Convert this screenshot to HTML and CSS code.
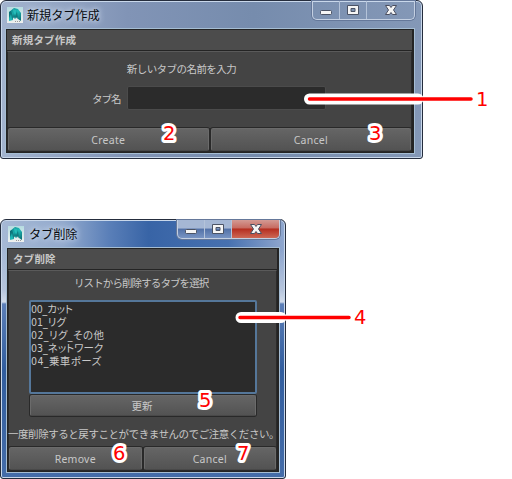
FILE: index.html
```
<!DOCTYPE html>
<html lang="ja">
<head>
<meta charset="utf-8">
<title>タブ作成・タブ削除</title>
<link rel="stylesheet" href="styles.css">
</head>
<body>
<svg class="defs" width="0" height="0" aria-hidden="true">
  <defs>
    <linearGradient id="teal" x1="0" y1="0" x2="1" y2="1"><stop offset="0" stop-color="#087d83"/><stop offset=".5" stop-color="#20bcb8"/><stop offset="1" stop-color="#08666d"/></linearGradient>
    <linearGradient id="paper" x1="0" y1="0" x2="0" y2="1"><stop offset="0" stop-color="#b5dce1"/><stop offset="1" stop-color="#f0f1ef"/></linearGradient>
    <symbol id="maya" viewBox="0 0 16 16">
      <path fill="url(#paper)" d="M0 0h16v16H0z"/>
      <path fill="url(#teal)" d="M2 5 7 1l4 1 3 4v8l-3-2-1-2-2 2-2-2v3l-4 1z"/>
      <path fill="#064e58" d="m2 5 2-1 2 5 1-3 1 3 2-5 1 8-3-2-3 2-1-5-2 4z" opacity=".5"/>
      <path fill="#35cbc5" d="m6 2 3 1-1 5-2-4z" opacity=".5"/>
      <path stroke="#999" stroke-dasharray="1 1" d="M8 14.500h6"/>
    </symbol>
    <symbol id="min" viewBox="0 0 14 12"><rect x="1.500" y="6.500" width="11" height="4" rx="1" fill="#f5f5f5" stroke="#4b5365"/></symbol>
    <symbol id="max" viewBox="0 0 14 12"><path fill="#f5f5f5" stroke="#4b5365" fill-rule="evenodd" d="M1.500 1.500h11v9h-11zM5 4.500v3h4v-3z"/></symbol>
    <symbol id="close" viewBox="0 0 14 12"><path fill="#f5f5f5" stroke="#4b4f60" d="M1.500 1.500h4L7 3.500l1.500-2h4L9.500 6l3 4.500h-4L7 8.500l-1.500 2h-4l3-4.500z"/></symbol>
  </defs>
</svg>
<main class="page">
  <section class="window create">
    <header class="titlebar">
      <svg class="app" width="16" height="16"><use href="#maya"/></svg>
      <span class="title">新規タブ作成</span>
      <div class="controls">
        <i><svg width="14" height="12"><use href="#min"/></svg></i>
        <i><svg width="14" height="12"><use href="#max"/></svg></i>
        <i class="x"><svg width="14" height="12"><use href="#close"/></svg></i>
      </div>
    </header>
    <div class="client">
      <div class="menu">新規タブ作成</div>
      <div class="content">
        <p class="prompt">新しいタブの名前を入力</p>
        <div class="field"><label>タブ名</label><span class="input"></span></div>
        <div class="actions"><div class="btn"><span>Create</span></div><div class="btn"><span>Cancel</span></div></div>
      </div>
    </div>
  </section>
  <section class="window remove">
    <header class="titlebar">
      <svg class="app" width="16" height="16"><use href="#maya"/></svg>
      <span class="title">タブ削除</span>
      <div class="controls">
        <i><svg width="14" height="12"><use href="#min"/></svg></i>
        <i><svg width="14" height="12"><use href="#max"/></svg></i>
        <i class="x"><svg width="14" height="12"><use href="#close"/></svg></i>
      </div>
    </header>
    <div class="client">
      <div class="menu">タブ削除</div>
      <div class="content">
        <p class="prompt">リストから削除するタブを選択</p>
        <ul class="list"><li class="tight">00_カット</li><li>01_リグ</li><li class="wide">02_リグ_その他</li><li>03_ネットワーク</li><li class="wide">04_乗車ポーズ</li></ul>
        <div class="btn update"><span>更新</span></div>
        <p class="note">一度削除すると戻すことができませんのでご注意ください。</p>
        <div class="actions"><div class="btn"><span>Remove</span></div><div class="btn"><span>Cancel</span></div></div>
      </div>
    </div>
  </section>
</main>
<svg class="callouts" width="512" height="479" viewBox="0 0 512 479">
  <path class="halo" d="M309.500 99H418M241 317.500H281"/>
  <path class="lead" d="M309.500 99H471M240 317.500H349"/>
  <text x="476" y="106">1</text>
  <text x="163" y="140">2</text>
  <text x="369" y="140">3</text>
  <text x="354" y="324">4</text>
  <text x="199" y="407">5</text>
  <text x="113" y="460">6</text>
  <text x="237" y="460">7</text>
</svg>
</body>
</html>
```
FILE: styles.css
```
* { box-sizing: border-box; }
body { margin: 0; background: #fff; font-family: "Liberation Sans", "Noto Sans CJK JP", sans-serif; overflow: hidden; }
.defs { position: absolute; }
p, ul { margin: 0; padding: 0; list-style: none; white-space: nowrap; }
.page { display: flex; flex-direction: column; align-items: flex-start; gap: 60px; height: 479px; }
.window { display: flex; flex-direction: column; border: 1px solid #252d3d; border-radius: 6px 6px 3px 3px; box-shadow: inset 0 0 0 1px #c9d8eb; }
.create { width: 423px; height: 159px; padding: 0 8px 5px 5px; background: linear-gradient(90deg, #a3b4cf, #8194b6 30%, #768cad 60%, #8498b7); }
.remove { width: 286px; height: 260px; padding: 0 6px 6px 6px; background: linear-gradient(180deg, transparent 30px, #b6c5dd 70px, #d1dbea 82px, #5c7fb8 84px, #315d9e 150px, #456da9 100%), linear-gradient(90deg, #a6b9d5, #93aacd 22%, #5a7fb8 38%, #3864a6 52%, #4771b0 80%, #91a8cf); }
.titlebar { display: flex; align-items: flex-start; height: 28px; flex: none; }
.app { margin: 6px 0 0 1px; flex: none; }
.title { flex: 1; margin: 4px 0 0 4px; font: 12.200px/20px "Noto Sans CJK JP", sans-serif; color: #080b10; text-shadow: 0 0 7px #dce7f5, 0 0 5px #c9d8eb; letter-spacing: -.1px; }
.controls { display: flex; height: 19px; border: 1px solid #c4d0e2; border-top: 0; border-radius: 0 0 5px 5px; box-shadow: 0 0 0 1px #65789a; }
.controls i { display: flex; align-items: center; justify-content: center; width: 27px; border-right: 1px solid #b4c3d9; }
.controls .x { width: 47px; border: 0; }
.create .controls { margin-right: -1px; }
.remove .controls { background: linear-gradient(#a5b7d4 45%, #5271a7 50%, #7894c3); margin-right: -1px; }
.remove .x { border-radius: 0 0 4px 0; background: linear-gradient(#d39a94, #c76b61 44%, #b52e20 50%, #cd6855); }
.remove .title { margin-left: 5px; }
.client { flex: 1; display: flex; flex-direction: column; background: #444; border: 1px solid #242424; border-right-width: 2px; box-shadow: 0 0 0 1px #a5bdd3; color: #c8c8c8; font: 10.500px/13px "Noto Sans CJK JP", sans-serif; }
.menu { height: 21px; flex: none; background: #4c4c4c; border-bottom: 1px solid #242424; padding-left: 5px; font-weight: 700; line-height: 19px; letter-spacing: .2px; }
.content { flex: 1; display: flex; flex-direction: column; border: 1px solid #2b2b2b; border-top-color: #5a5a5a; }
.create .prompt { padding-top: 10px; text-align: center; margin-right: 56px; letter-spacing: -.55px; }
.field { display: flex; align-items: center; margin: 11px 0 0 84px; height: 24px; }
.field label { width: 35px; letter-spacing: -1px; }
.input { width: 199px; height: 24px; background: #2b2b2b; border: 1px solid #4b4b4b; border-radius: 2px; }
.actions { display: flex; gap: 2px; height: 23px; margin-top: auto; background: #292929; }
.btn { flex: 1; display: flex; align-items: center; justify-content: center; background: linear-gradient(#656565, #535353); border: 1px solid #6b6b6b; border-bottom-color: #494949; border-radius: 2px; box-shadow: 0 0 0 1px #292929; }
.actions .btn { font: 10.500px/20px "Noto Sans", sans-serif; letter-spacing: .25px; }
.remove .prompt { margin: 5px 0 0 65px; letter-spacing: -.9px; }
.list { height: 94px; width: 228px; margin: 11px 0 0 20px; padding: 1px 0; background: #2b2b2b; border: 2px solid #55779a; border-radius: 2px; font: 10.500px/13px "DejaVu Sans Condensed", "Noto Sans CJK JP", sans-serif; font-feature-settings: "palt"; }
.wide { letter-spacing: .4px; }
.tight { letter-spacing: -.2px; }
.update { flex: none; width: 226px; height: 21px; margin: 1px 0 0 21px; }
.update span { margin-right: 2px; }
.note { margin: 11px 0 0 -1px; letter-spacing: -.45px; }
.callouts { position: absolute; left: 0; top: 0; }
.callouts path { fill: none; stroke-linecap: round; }
.callouts .halo { stroke: #fff; stroke-width: 11; }
.callouts .lead { stroke: #f00; stroke-width: 3.500; }
.callouts text { font: 19.500px "DejaVu Sans", sans-serif; fill: #f00; stroke: #fff; stroke-width: 6px; stroke-linejoin: round; paint-order: stroke; }
```
